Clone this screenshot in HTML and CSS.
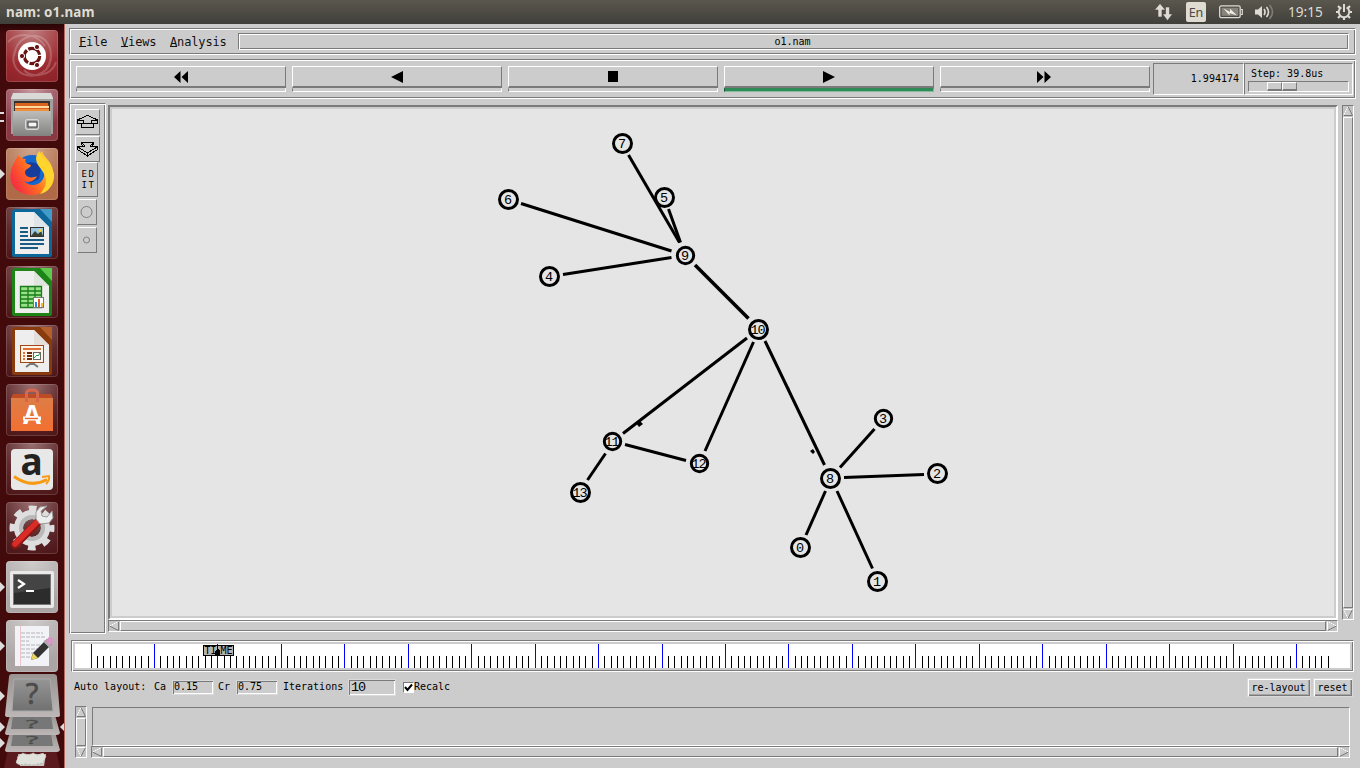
FILE: index.html
```html
<!DOCTYPE html>
<html lang="en">
<head>
<meta charset="utf-8">
<title>nam: o1.nam</title>
<link rel="stylesheet" href="styles.css">
</head>
<body>
<header class="topbar">
  <div class="topbar-title">nam: o1.nam</div>
  <div class="indicators">
    <svg class="ind-net" width="19" height="18" viewBox="0 0 19 18"><path d="M6 .5.500 7H4v7h4V7h3.500zM13.500 17.500l5-6.500h-3V4h-4v7H8.500z" fill="#dfdbd2" stroke="#4a4842" stroke-width=".6"/></svg>
    <span class="ind-lang">En</span>
    <svg class="ind-bat" width="24" height="14" viewBox="0 0 24 14"><rect x=".7" y=".9" width="20.500" height="11.800" rx="1.600" fill="none" stroke="#dfdbd2" stroke-width="1.300"/><path d="M22 4.500h1.300v5H22" fill="none" stroke="#dfdbd2" stroke-width="1.200"/><rect x="2.600" y="2.800" width="16.700" height="8" fill="#87847c"/><path d="M4.500 3.500 11 7V3.800L18 10.500 10.500 8v2.500z" fill="#f0ede5"/></svg>
    <svg class="ind-vol" width="20" height="16" viewBox="0 0 20 16"><path d="M0 5.500h3L7 2v12L3 10.500H0z" fill="#dfdbd2"/><g fill="none" stroke-width="1.600"><path d="M9 5q2.200 3 0 6" stroke="#dfdbd2"/><path d="M11.500 3q4 5 0 10" stroke="#dfdbd2"/><path d="M14.500 1q6 7 0 14" stroke="#827f77"/></g></svg>
    <span class="ind-clock">19:15</span>
    <svg class="ind-gear" width="18" height="18" viewBox="0 0 18 18"><g fill="none" stroke="#dfdbd2"><path d="M6.400 4.300a5.300 5.300 0 1 0 5.200 0" stroke-width="2"/><path d="M9 1v8" stroke-width="2"/><path d="M3 3l2 2M15 3l-2 2M1 9h2.500M14.500 9H17M3 15l2-2M15 15l-2-2M9 14v3" stroke-width="2.200"/></g></svg>
  </div>
</header>
<div class="desktop">
<nav class="launcher">
  <div class="tile tile-dash"><svg width="52" height="52" viewBox="0 0 52 52"><g fill="none" stroke="#fff" stroke-opacity=".2" stroke-width="2"><path d="M8 26C10 7 28 1 39 10c8 8 7 20 2 28M45 24c1 18-15 25-28 20C7 39 5 28 10 19M2 12c12-12 30-7 37 4M50 32c-4 14-24 17-32 8"/></g><circle cx="26" cy="26" r="14" fill="#fff"/><circle cx="26" cy="26" r="7.700" fill="none" stroke="#681414" stroke-width="3.200" stroke-dasharray="14.500 1.600"/><g fill="#681414" stroke="#fff"><circle cx="16" cy="26" r="2.600"/><circle cx="31" cy="17" r="2.600"/><circle cx="31" cy="35" r="2.600"/></g></svg></div>
  <div class="tile tile-files"><svg width="52" height="52" viewBox="0 0 52 52"><defs><linearGradient id="cab" x2="0" y2="1"><stop stop-color="#bdbdbb"/><stop offset="1" stop-color="#828280"/></linearGradient></defs><path d="M7 4h38l2 5v35H5V9z" fill="#d9d9d7"/><path d="M5 10h42v35H5z" fill="#a0a09e"/><path d="M8 12h36v11H8z" fill="#3a302c"/><path d="M9 14h33l1 9H9z" fill="#d9641e"/><path d="M9 17h34v2H9z" fill="#ffd9a0"/><path d="M9 20h34v3H9z" fill="#ef8f3b"/><path d="M7 22h38v25H7z" fill="url(#cab)"/><rect x="19.500" y="30.500" width="13" height="10" rx="1.500" fill="#aaa" stroke="#d8d8d8"/><rect x="22" y="33" width="9" height="5" fill="#f4f4f4" stroke="#333"/></svg></div>
  <div class="tile tile-firefox"><svg width="52" height="52" viewBox="0 0 52 52"><defs><linearGradient id="fox" x1="0" y1=".8" x2="1" y2=".2"><stop stop-color="#f52347"/><stop offset=".45" stop-color="#ff6b22"/><stop offset="1" stop-color="#ffe23d"/></linearGradient></defs><circle cx="26" cy="25" r="18" fill="#1467cf"/><path d="M16 20Q24 9 35 19l-2 12-9 4z" fill="#163c9c"/><path d="M12 7c2 2 5 4 8 4-2 3 0 5 5 6 0 3-6 4-6 7 0 5 6 7 12 4-3 6-9 7-13 5 8 9 23 2 20-11-1-6-7-11-4-16l2-3c1 6 10 10 11 20 2 13-8 24-21 24C11 47 2 36 5 23 6 17 10 12 12 7z" fill="url(#fox)"/><path d="M30 10q1-5 4-7c0 6 12 12 14 23 1 11-7 19-14 20 8-9 7-15 3-22-3-5-7-8-7-14z" fill="#ffd52d"/></svg></div>
  <div class="tile tile-dark"><svg width="52" height="52" viewBox="0 0 52 52"><path d="M8 2h38v46q0 2-2 2H8q-2 0-2-2V4z" fill="#0d679b"/><path d="M34 2h12v13z" fill="#429cca"/><path d="M9 5h19l15 15v27H9z" fill="#eee"/><path d="M28 5v15h15" fill="#dfe4e8"/><path d="M14 21h8M14 25h8M14 29h8M14 33h24M14 37h24M14 41h18" stroke="#195d84" stroke-width="2"/><rect x="24.500" y="20.500" width="13" height="9" fill="#9cc8e4" stroke="#333"/><path d="M25 29l4-5 3 3 3-3 2 5z" fill="#3b4230"/><circle cx="34" cy="23.500" r="1.500" fill="#ffd52d"/></svg></div>
  <div class="tile tile-dark"><svg width="52" height="52" viewBox="0 0 52 52"><path d="M8 2h38v46q0 2-2 2H8q-2 0-2-2V4z" fill="#1d8417"/><path d="M34 2h12v13z" fill="#5ecb4e"/><path d="M9 5h19l15 15v27H9z" fill="#eee"/><path d="M28 5v15h15" fill="#dfe5dd"/><path d="M14 21h21v20H14z" fill="#9ae089"/><path d="M14.500 20.500h21v21h-21zM14 25h22M14 29h22M14 33h22M14 37h22M22 21v20M29 21v20" fill="none" stroke="#197c19" stroke-width="1.300"/><rect x="27.500" y="31.500" width="10" height="10" fill="#fff" stroke="#777"/><path d="M29 36h2v5h-2z" fill="#258ed0"/><path d="M32 33h2v8h-2z" fill="#e25b22"/><path d="M35 37h2v4h-2z" fill="#f2bb27"/></svg></div>
  <div class="tile tile-dark"><svg width="52" height="52" viewBox="0 0 52 52"><path d="M8 2h38v46q0 2-2 2H8q-2 0-2-2V4z" fill="#8a3b0d"/><path d="M34 2h12v13z" fill="#b5602c"/><path d="M9 5h19l15 15v27H9z" fill="#eee"/><path d="M28 5v15h15" fill="#e5dfdc"/><path d="M26 37v3m-6 2 4-3h4l4 3" fill="none" stroke="#777" stroke-width="2"/><rect x="14.500" y="20.500" width="23" height="17" fill="#fff4e8" stroke="#a24718"/><path d="M17 24h18" stroke="#e07038" stroke-width="2"/><path d="M17 28h2M17 31h2M17 34h2" stroke="#e07038" stroke-width="2"/><path d="M21 28h5M21 31h5M21 34h5" stroke="#6c2b10" stroke-width="2"/><rect x="27.500" y="27.500" width="7" height="7" fill="#fff" stroke="#666"/><path d="m28 33 3-3 1 1 2-3" fill="none" stroke="#219a3b"/></svg></div>
  <div class="tile tile-dark"><svg width="52" height="52" viewBox="0 0 52 52"><defs><linearGradient id="bag" x2="0" y2="1"><stop stop-color="#dd7d46"/><stop offset="1" stop-color="#f36f31"/></linearGradient></defs><path d="M7 10h38l2 4v33H5V14z" fill="#bd4b25"/><path d="M5 14h42v33H5z" fill="url(#bag)"/><path d="M20.500 18V9q0-3 5.500-3t5.500 3v9" fill="none" stroke="#d8674a" stroke-width="3"/><text class="store-letter" x="26" y="40" text-anchor="middle">A</text><path d="M17 34.500h18" stroke="#fff" stroke-width="4"/><path d="M19 34.500h13" stroke="#e8672c" stroke-width="1.400"/></svg></div>
  <div class="tile tile-dark"><svg width="52" height="52" viewBox="0 0 52 52"><rect x="5" y="6" width="42" height="41" rx="4" fill="#e8e8e8"/><text class="shop-letter" x="25.500" y="32" text-anchor="middle">a</text><path d="M8 33.500q17 12 33 3" fill="none" stroke="#f79a16" stroke-width="3"/><path d="m36 34 7-1q1 4-3 8" fill="none" stroke="#f79a16" stroke-width="2"/></svg></div>
  <div class="tile tile-dark"><svg width="52" height="52" viewBox="0 0 52 52"><circle cx="26" cy="26" r="13.500" fill="none" stroke="#dedede" stroke-width="9"/><circle cx="26" cy="26" r="19.500" fill="none" stroke="#dedede" stroke-width="6" stroke-dasharray="7.660 7.660" stroke-dashoffset="3.800"/><circle cx="26" cy="26" r="11" fill="none" stroke="#b9b9b9" stroke-width="4"/><path d="M9 43 32 20" stroke="#8c1411" stroke-width="8" stroke-linecap="round"/><path d="M9 42 31 20" stroke="#da2c27" stroke-width="5.500" stroke-linecap="round"/><path d="m30 17 4 5 9-1 4-5-1-7-5 6-5-1-1-5 6-5-7 1-4 5z" fill="#ececec" stroke="#999"/></svg></div>
  <div class="tile tile-grey"><svg width="52" height="52" viewBox="0 0 52 52"><rect x="4" y="10" width="44" height="37" rx="2" fill="#e9e9e9"/><rect x="7.500" y="13.500" width="37" height="30" fill="#2c2c2c" stroke="#777"/><path d="M8 14h36v13L8 32z" fill="#444"/><path d="m12 19 6 4-6 4M20 30h8" fill="none" stroke="#fff" stroke-width="2.200"/></svg></div>
  <div class="tile tile-grey"><svg width="52" height="52" viewBox="0 0 52 52"><path d="M9 6h34v40H9z" fill="#f1f3f7"/><path d="M14.500 6v40" stroke="#edc5ca"/><path d="M15 13h22M15 17h24M15 21h8M15 25h22M15 29h20M15 33h18M15 37h14" stroke="#b4b4b8" stroke-dasharray="4 1"/><path d="M25 40 27 33 41 19l5 5-14 14z" fill="#333"/><path d="m25 40 2-7 5 5z" fill="#e9d55b"/><path d="m38 22 5-5q5 0 5 5l-5 5z" fill="#d798c5"/><path d="m38 21 6 6" stroke="#aaa" stroke-width="2"/></svg></div>
  <svg class="stack" width="65" height="96" viewBox="0 0 65 96">
    <defs><linearGradient id="fold" x2="0" y2="1"><stop stop-color="#999391"/><stop offset="1" stop-color="#bdb8b7"/></linearGradient><linearGradient id="gl" x2="0" y2="1"><stop stop-color="#959595"/><stop offset="1" stop-color="#717171"/></linearGradient></defs>
    <path d="M8 78h48l4 18H4z" fill="#5a1a1e"/><path d="M18 82h28l-2 12H20z" fill="#c8c8c3"/><path d="m18 84 5-3 5 2 5-2 5 2 5-2 3 3-3 7-5 1-5 1-8-1-5 1-4-2z" fill="#e2e2dd" stroke="#b4b4b0" stroke-dasharray="2 2"/>
    <path d="M10 60h45l5 18q-1 2-3 2H8q-3 0-3-2z" fill="url(#fold)"/><path d="M13 62h38l2 12H11z" fill="#777"/><text class="q" transform="translate(32 72) scale(1 .36)" text-anchor="middle">?</text>
    <path d="M10 43h45l5 18q-1 2-3 2H8q-3 0-3-2z" fill="url(#fold)"/><path d="M13 44h38l2 13H11z" fill="#777"/><text class="q" transform="translate(32 56) scale(1 .36)" text-anchor="middle">?</text>
    <path d="M12 2h41q4 0 4 3l3 38q0 2-3 2H8q-3 0-3-2L9 5q0-3 3-3z" fill="url(#fold)"/><path d="M14 7h36l3 32H12z" fill="url(#gl)" stroke="#aaa"/><text class="q" x="32" y="32" text-anchor="middle">?</text>
    <path d="m0 19 5 5-5 5zM0 50l5 5-5 5zM0 66l5 5-5 5zM65 50l-5 5 5 5z" fill="#ddd"/>
  </svg>
</nav>
<main class="app">
  <div class="groove menubar">
    <span class="menu"><u>F</u>ile</span><span class="menu"><u>V</u>iews</span><span class="menu"><u>A</u>nalysis</span>
    <div class="groove filename">o1.nam</div>
  </div>
  <div class="groove toolbar">
    <div class="play"><button class="pbtn"><svg width="16" height="12" viewBox="0 0 16 12"><path d="M7.500 0v12L1 6zM15 0v12L8.500 6z"/></svg></button><i class="bar"></i></div>
    <div class="play"><button class="pbtn"><svg width="16" height="12" viewBox="0 0 16 12"><path d="M14 0v12L2 6z"/></svg></button><i class="bar"></i></div>
    <div class="play"><button class="pbtn"><svg width="16" height="12" viewBox="0 0 16 12"><path d="M3 0h10v11H3z"/></svg></button><i class="bar"></i></div>
    <div class="play"><button class="pbtn"><svg width="16" height="12" viewBox="0 0 16 12"><path d="M2 0v12l12-6z"/></svg></button><i class="bar bar-on"></i></div>
    <div class="play"><button class="pbtn"><svg width="16" height="12" viewBox="0 0 16 12"><path d="M0 0v12l6.500-6zM7.500 0v12L14 6z"/></svg></button><i class="bar"></i></div>
    <div class="sunken clock">1.994174</div>
    <div class="sunken step"><span>Step: 39.8us</span><div class="sunken scale"><i class="thumb"></i><i class="thumb"></i></div></div>
  </div>
  <div class="work">
    <div class="groove tools">
      <div class="raised tool t-zoom"><svg width="23" height="16" viewBox="0 0 23 16" shape-rendering="crispEdges"><path d="M11 1.500 1.500 6v3.500H5v4h12v-4h4.500V6L12 1.500zM2 6.500h5.500v3M21 6.500h-5.500v3M5 9.500h12"/></svg></div>
      <div class="raised tool t-zoom"><svg width="23" height="16" viewBox="0 0 23 16" shape-rendering="crispEdges"><path d="M5.500 1.500h12l-1 4h5v3L11.500 15 1.500 8.500v-3h5zM6 2l3 3-3 1M17 2l-3 3 3 1M2 6l9.500 6L21 6M11.500 12v3"/></svg></div>
      <div class="raised tool t-edit"><span>ED</span><span>IT</span></div>
      <div class="raised tool t-node"><svg width="14" height="14" viewBox="0 0 14 14"><circle cx="6.500" cy="7" r="5.500"/></svg></div>
      <div class="raised tool t-node"><svg width="14" height="14" viewBox="0 0 14 14"><circle cx="6.500" cy="7" r="3"/></svg></div>
    </div>
    <div class="viewcol">
      <div class="canvas"><svg id="net" width="1222" height="507" viewBox="112 109 1222 507"></svg></div>
      <div class="sb sb-h"><svg class="arr" width="10" height="10" viewBox="0 0 10 10"><path class="tri" d="M9.500.5v9L.5 5z"/><path class="hi" d="M9.500.5.5 5"/></svg><i class="sb-thumb"></i><svg class="arr" width="10" height="10" viewBox="0 0 10 10"><path class="tri" d="M.5.5v9l9-4.500z"/><path class="hi" d="M9.500 5 .5.5v9"/></svg></div>
    </div>
    <div class="sb sb-v"><svg class="arr" width="10" height="10" viewBox="0 0 10 10"><path class="tri" d="M.5 9.500h9L5 .5z"/><path class="hi" d="M.5 9.500 5 .5"/></svg><i class="sb-thumb"></i><svg class="arr" width="10" height="10" viewBox="0 0 10 10"><path class="tri" d="M.5.5h9L5 9.500z"/><path class="hi" d="M9.500.5h-9L5 9.500"/></svg></div>
  </div>
  <div class="groove ruler"><svg id="ticks" width="1275" height="24" viewBox="75 644 1275 24" shape-rendering="crispEdges"></svg></div>
  <div class="options">
    <span class="l-auto">Auto layout:</span><span class="l-ca">Ca</span><div class="entry e-small">0.15</div>
    <span class="l-cr">Cr</span><div class="entry e-small">0.75</div>
    <span class="l-it">Iterations</span><div class="entry e-big">10</div>
    <div class="check"><svg width="9" height="9" viewBox="0 0 9 9"><path d="M1 4l2.500 3L8 1.500" fill="none" stroke="#000" stroke-width="2"/></svg></div><span>Recalc</span>
    <div class="buttons"><button class="btn b-layout">re-layout</button><button class="btn b-reset">reset</button></div>
  </div>
  <div class="notes">
    <div class="sb sb-v"><svg class="arr" width="10" height="10" viewBox="0 0 10 10"><path class="tri" d="M.5 9.500h9L5 .5z"/><path class="hi" d="M.5 9.500 5 .5"/></svg><i class="sb-thumb"></i><svg class="arr" width="10" height="10" viewBox="0 0 10 10"><path class="tri" d="M.5.5h9L5 9.500z"/><path class="hi" d="M9.500.5h-9L5 9.500"/></svg></div>
    <div class="notecol"><div class="sunken notebox"></div>
    <div class="sb sb-h"><svg class="arr" width="10" height="10" viewBox="0 0 10 10"><path class="tri" d="M9.500.5v9L.5 5z"/><path class="hi" d="M9.500.5.5 5"/></svg><i class="sb-thumb"></i><svg class="arr" width="10" height="10" viewBox="0 0 10 10"><path class="tri" d="M.5.5v9l9-4.500z"/><path class="hi" d="M9.500 5 .5.5v9"/></svg></div></div>
  </div>
</main>
</div>
<script src="nam.js"></script>
</body>
</html>
```
FILE: styles.css
```css
* { box-sizing: border-box; }
body { margin: 0; width: 1360px; height: 768px; overflow: hidden; background: #ccc; display: flex; flex-direction: column; font: 10px/12px "DejaVu Sans Mono", monospace; color: #000; }
svg { display: block; flex: none; }
.topbar { height: 24px; flex: none; display: flex; justify-content: space-between; align-items: center; background: linear-gradient(#5a574e, #403f3a); color: #dfdbd2; padding: 0 7px 0 6px; }
.topbar-title { font: bold 13.400px/24px "Noto Sans", sans-serif; letter-spacing: .2px; }
.indicators { display: flex; align-items: center; }
.ind-lang { width: 20px; height: 20px; margin-left: 13px; border-radius: 2px; background: #dfdbd2; color: #4a4842; font: 12.500px/21px "Noto Sans", sans-serif; text-align: center; }
.ind-bat { margin-left: 13px; }
.ind-vol { margin-left: 12px; }
.ind-clock { margin-left: 13px; width: 36px; font: 13.600px/24px "Noto Sans", sans-serif; white-space: nowrap; }
.ind-gear { margin-left: 11px; }
.desktop { flex: 1; display: flex; min-height: 0; }
.launcher { width: 65px; flex: none; display: flex; flex-direction: column; gap: 7px; padding-top: 6px; overflow: hidden; background: linear-gradient(#2a0506, #430a0c 10px, #430a0c); border-right: 1px solid #b5685f; }
.tile { position: relative; width: 52px; height: 52px; flex: none; margin-left: 6px; border-radius: 4px; box-shadow: inset 0 0 0 1px rgba(255,255,255,.15); }
.tile svg { overflow: visible; }
.tile-dash { background: radial-gradient(circle at 50% 0, #c08080, #9c2a30 65%, #8a2228); }
.tile-files { background: radial-gradient(circle at 50% 0, #c69aa2, #8a3844 70%); }
.tile-firefox { background: radial-gradient(circle at 50% 0, #d0a890, #b06a48 70%); }
.tile-dark { background: radial-gradient(circle at 50% 0, #9a7072, #5e2a2c 55%, #4c1518); }
.tile-grey { background: radial-gradient(circle at 50% 0, #d0cccc, #aca5a5 75%); }
.tile-files::before, .tile-firefox::before, .tile:nth-child(10)::before, .tile:nth-child(11)::before { content: ""; position: absolute; left: -6px; top: 21px; border: 5px solid transparent; border-left-color: #ddd; border-right: 0; }
.tile-files::before { top: 23px; width: 4px; height: 6px; border: solid #ddd; border-width: 2px 0; }
.stack { margin-top: -7px; }
.store-letter { font: bold 26px "Noto Sans", sans-serif; fill: #fff; }
.shop-letter { font: bold 37px/1 "Noto Sans", sans-serif; fill: #222; }
.q { font: 29px "Noto Sans", sans-serif; fill: #4c4c4c; stroke: #4c4c4c; stroke-width: .7; }
.app { flex: 1; min-width: 0; display: flex; flex-direction: column; padding: 4px 4px 0 4px; }
.groove { border: 1px solid; border-color: #7a7a7a #fff #fff #7a7a7a; box-shadow: inset 1px 1px #fff, inset -1px -1px #7a7a7a; }
.sunken { border: 1px solid; border-color: #7a7a7a #fff #fff #7a7a7a; }
.raised { border: 1px solid; border-color: #fff #7a7a7a #7a7a7a #fff; }
.menubar { width: 1287px; height: 27px; flex: none; display: flex; align-items: center; padding: 0 6px 0 9px; font-size: 12px; letter-spacing: -.22px; }
.menu { width: 42px; white-space: nowrap; flex: none; line-height: 15px; padding-top: 2px; letter-spacing: -.15px; color: #111; }
.menu:nth-child(2) { width: 49px; }
.menu:nth-child(3) { width: 68px; }
.menu u { text-underline-offset: 0; text-decoration-thickness: 1px; text-decoration-skip-ink: none; }
.filename { flex: 1; height: 17px; text-align: center; font-size: 10px; line-height: 16px; letter-spacing: 0; padding-right: 2px; }
.toolbar { width: 1287px; height: 40px; flex: none; margin-top: 4px; display: flex; padding: 3px 2px 0 6px; }
.play { width: 210px; margin: 3px 6px 0 0; flex: none; }
.pbtn { display: flex; justify-content: center; align-items: center; width: 210px; height: 22px; padding: 0; background: #ccc; border: 1px solid; border-color: #fff #7a7a7a #7a7a7a #fff; border-bottom-width: 2px; }
.pbtn svg { margin-top: 1px; }
.bar { display: block; height: 4px; border: 1px solid; border-color: #ccc #fff #fff #7a7a7a; }
.bar-on { background: #2e8b57; border-color: #2e8b57 #84bb9c #84bb9c #1b5334; }
.play:nth-child(5) { margin-right: 3px; }
.clock { width: 91px; height: 32px; line-height: 30px; text-align: right; padding-right: 4px; }
.step { width: 109px; height: 32px; padding: 3px 3px 0 3px; }
.step span { display: block; padding-left: 3px; line-height: 14px; }
.scale { height: 11px; padding-left: 18px; display: flex; }
.thumb { width: 15px; height: 9px; border: 1px solid; border-color: #fff #7a7a7a #7a7a7a #fff; border-bottom-width: 2px; }
.work { display: flex; flex: none; margin-top: 4px; height: 531px; }
.tools { width: 37px; margin-right: 2px; padding: 5px 0 0 5px; }
.tool { display: flex; align-items: center; justify-content: center; }
.tool svg { fill: none; stroke: #000; stroke-width: 1; }
.t-zoom { width: 25px; height: 26px; margin-bottom: 1px; }
.t-edit { width: 21px; height: 35px; margin: -1px 0 2px 2px; flex-direction: column; font: 9px/11px "DejaVu Sans Mono", monospace; letter-spacing: 1.500px; padding-left: 2px; }
.t-node { width: 20px; height: 26px; margin: 0 0 2px 2px; }
.t-node svg { stroke: #808080; }
.viewcol { width: 1230px; margin-top: 2px; }
.canvas { width: 1230px; height: 515px; border: 2px solid; border-color: #7a7a7a #fff #fff #7a7a7a; padding: 2px; }
.canvas svg { background: #e5e5e5; }
#net text { font: 13.500px "Liberation Mono", monospace; letter-spacing: -1.100px; text-anchor: middle; }
.sb { display: flex; background: #c3c3c3; border: 1px solid; border-color: #7a7a7a #fff #fff #7a7a7a; }
.sb-v { width: 12px; flex-direction: column; }
.sb-h { height: 12px; }
.work > .sb-v { height: 515px; margin: 2px 0 0 4px; }
.sb-thumb { flex: 1; background: #ccc; border: 1px solid; border-color: #fff #7a7a7a #7a7a7a #fff; }
.sb-h .sb-thumb { margin: 0 1px; }
.sb-v .sb-thumb { margin: 1px 0; }
.tri { fill: #ccc; stroke: #7a7a7a; }
.hi { fill: none; stroke: #fff; }
.ruler { width: 1283px; height: 32px; flex: none; margin: 6px 0 0 2px; padding: 3px; }
#ticks { background: #fff; }
#ticks text { font: 10px "DejaVu Sans Mono", monospace; }
.options { height: 30px; flex: none; display: flex; align-items: center; padding-left: 5px; white-space: nowrap; }
.l-auto { width: 80px; }
.l-ca { width: 18px; }
.l-cr { width: 18px; margin-left: 4px; }
.l-it { width: 65px; margin-left: 5px; }
.entry { height: 15px; border: 1px solid transparent; outline: 1px solid #dadada; outline-offset: -1px; box-shadow: inset 1px 1px #7a7a7a, inset -1px -1px #fff; padding-left: 1px; line-height: 12px; }
.e-small { width: 42px; }
.e-big { width: 48px; height: 17px; font: 13.500px/15px "Liberation Mono", monospace; letter-spacing: -1.100px; padding-left: 2px; }
.check { width: 11px; height: 11px; background: #fff; border: 1px solid; border-color: #7a7a7a #fff #fff #7a7a7a; margin: 0 0 0 7px; }
.buttons { margin-left: auto; display: flex; gap: 2px; padding-right: 3px; }
.btn { height: 19px; background: #ccc; border: 1px solid #dadada; box-shadow: inset 1px 1px #fff, inset -1px -1px #7a7a7a, inset -2px -2px #a5a5a5; font: 10px/15px "DejaVu Sans Mono", monospace; padding: 0 1px 0 0; color: #000; }
.b-layout { width: 64px; }
.b-reset { width: 40px; }
.notes { display: flex; margin: 4px 0 0 6px; height: 52px; }
.notecol { width: 1259px; margin-left: 4px; }
.notebox { height: 39px; margin: 1px 0 0 1px; }
```
FILE: nam.js
```js
// Topology: node id -> centre, and the link segments between them
var nodes = [[800.5,547.5,0],[877.5,581.5,1],[937.5,473.5,2],[883.5,418.5,3,9.2],[549.5,276.5,4],[664.5,197.5,5],[508.5,199.5,6],[622.5,143.5,7],[830.5,478.5,8],[685.5,255.5,9,9.2],[758.5,329.5,10],[612.5,441.5,11,9.2],[699.5,463.5,12,9.2],[580.5,492.5,13]];
var links = [[628.5,155,679.5,242.5],[668.500,209,680.500,242.500],[521,203.500,671.500,251],[563,274.500,671.500,257.500],[695,265,748.500,318.500,3.6],[747,338,623,433.500],[753.500,342,705,451],[765,341,824.500,465],[625,444.500,686,460.500],[605.500,453.500,587.500,480],[840,467.500,874.500,429],[844,477.500,924,474.500],[825.500,491,806,535],[837,491,872.500,568.500]];
var out = '';
links.forEach(function (l) { out += '<line x1="' + l[0] + '" y1="' + l[1] + '" x2="' + l[2] + '" y2="' + l[3] + '" stroke="#000" stroke-width="' + (l[4] || 3) + '"/>'; });
nodes.forEach(function (n) { out += '<circle cx="' + n[0] + '" cy="' + n[1] + '" r="' + ((n[3] || 10) - 1) + '" fill="none" stroke="#000" stroke-width="3"/><text x="' + (n[0] - .9) + '" y="' + (n[1] + 4.5) + '">' + n[2] + '</text>'; });
// Packets in flight
out += '<path d="M636 423l4-2 3 3-4 3zM810 451l3-2 2 3-2 2zM786 387l4 1-2 1z"/>';
document.getElementById('net').innerHTML = out;

// Time ruler: one major tick for every ten minor ones
var t = '';
for (var k = 0; k <= 195; k++) {
  var x = Math.floor(91 + k * 6.345), major = k % 10 === 0;
  t += '<rect x="' + x + '" y="' + (major ? 644 : 656) + '" width="1" height="' + (major ? 24 : 12) + '" fill="' + (major ? '#00f' : '#000') + '"/>';
}
t += '<rect x="203.5" y="645.5" width="30" height="10" fill="#b3b3b3" stroke="#000"/><text x="204.5" y="654">TI</text><text x="220.5" y="654">ME</text><path d="M217 645h1v4l2 2v4h-5v-4l2-2z"/>';
document.getElementById('ticks').innerHTML = t;
```
